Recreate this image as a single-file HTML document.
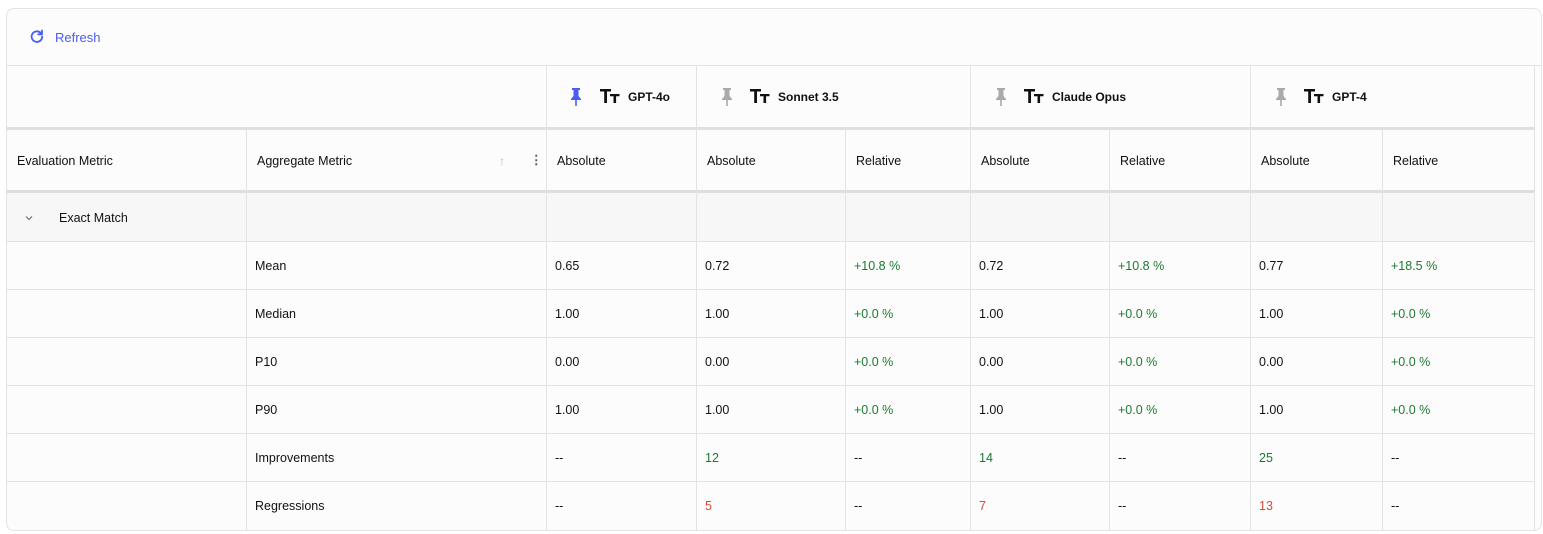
<!DOCTYPE html>
<html><head><style>
*{box-sizing:border-box;margin:0;padding:0}
body{width:1543px;height:534px;background:#fff;font-family:"Liberation Sans",sans-serif;font-size:12.5px;color:#111;position:relative;overflow:hidden}
.box{position:absolute;left:6px;top:8px;width:1536px;height:523px;border:1px solid #e4e4e4;border-radius:8px;background:#fcfcfc;overflow:hidden}
.a{position:absolute}
.h{position:absolute;height:1px;background:#e3e3e3}
.v{position:absolute;width:1px;background:#e3e3e3}
.t{position:absolute;white-space:nowrap;line-height:14px;margin-top:1px}
.g{color:#1b7a2e}.r{color:#e0463a}
</style></head><body>
<div class="box"></div>
<svg class="a" style="left:29px;top:29px" width="16" height="16" viewBox="0 0 16 16"><path d="M13.2 7.5A5.3 5.3 0 1 1 11.6 3.8" fill="none" stroke="#4a5cf5" stroke-width="1.8" stroke-linecap="round"/><path d="M13 1.5v3.8H9.2" fill="none" stroke="#4a5cf5" stroke-width="1.8" stroke-linecap="round" stroke-linejoin="round"/></svg>
<div class="t" style="left:55px;top:30px;color:#4a5cf5;font-size:13px">Refresh</div>
<div class="h" style="left:7px;top:65px;width:1534px"></div>
<div class="h" style="left:7px;top:127px;width:1527px;height:3px;background:#e0e0e0"></div>
<div class="h" style="left:7px;top:190px;width:1527px;height:3px;background:#dedede"></div>
<div class="a" style="left:7px;top:193px;width:1527px;height:48px;background:#f7f7f7"></div>
<div class="h" style="left:7px;top:241px;width:1527px"></div>
<div class="h" style="left:7px;top:289px;width:1527px"></div>
<div class="h" style="left:7px;top:337px;width:1527px"></div>
<div class="h" style="left:7px;top:385px;width:1527px"></div>
<div class="h" style="left:7px;top:433px;width:1527px"></div>
<div class="h" style="left:7px;top:481px;width:1527px"></div>
<div class="v" style="left:546px;top:65px;height:466px"></div>
<div class="v" style="left:696px;top:65px;height:466px"></div>
<div class="v" style="left:970px;top:65px;height:466px"></div>
<div class="v" style="left:1250px;top:65px;height:466px"></div>
<div class="v" style="left:1534px;top:65px;height:466px"></div>
<div class="v" style="left:246px;top:130px;height:401px"></div>
<div class="v" style="left:845px;top:130px;height:401px"></div>
<div class="v" style="left:1109px;top:130px;height:401px"></div>
<div class="v" style="left:1382px;top:130px;height:401px"></div>
<svg class="a" style="left:568px;top:87px" width="16" height="20" viewBox="0 0 16 20"><path d="M4 1h8v2h-1.5v6l2.5 3v1H3v-1l2.5-3V3H4z" fill="#4a5cf5"/><rect x="7.2" y="13" width="1.6" height="6" fill="#4a5cf5"/></svg>
<svg class="a" style="left:719px;top:87px" width="16" height="20" viewBox="0 0 16 20"><path d="M4 1h8v2h-1.5v6l2.5 3v1H3v-1l2.5-3V3H4z" fill="#aaa"/><rect x="7.2" y="13" width="1.6" height="6" fill="#aaa"/></svg>
<svg class="a" style="left:993px;top:87px" width="16" height="20" viewBox="0 0 16 20"><path d="M4 1h8v2h-1.5v6l2.5 3v1H3v-1l2.5-3V3H4z" fill="#aaa"/><rect x="7.2" y="13" width="1.6" height="6" fill="#aaa"/></svg>
<svg class="a" style="left:1273px;top:87px" width="16" height="20" viewBox="0 0 16 20"><path d="M4 1h8v2h-1.5v6l2.5 3v1H3v-1l2.5-3V3H4z" fill="#aaa"/><rect x="7.2" y="13" width="1.6" height="6" fill="#aaa"/></svg>
<svg class="a" style="left:600px;top:88px" width="20" height="16" viewBox="0 0 20 16"><path d="M0 1h11v2.5H7V15H4.2V3.5H0z M10 6h9.5v2.2h-3.4V15h-2.6V8.2H10z" fill="#111"/></svg>
<svg class="a" style="left:750px;top:88px" width="20" height="16" viewBox="0 0 20 16"><path d="M0 1h11v2.5H7V15H4.2V3.5H0z M10 6h9.5v2.2h-3.4V15h-2.6V8.2H10z" fill="#111"/></svg>
<svg class="a" style="left:1024px;top:88px" width="20" height="16" viewBox="0 0 20 16"><path d="M0 1h11v2.5H7V15H4.2V3.5H0z M10 6h9.5v2.2h-3.4V15h-2.6V8.2H10z" fill="#111"/></svg>
<svg class="a" style="left:1304px;top:88px" width="20" height="16" viewBox="0 0 20 16"><path d="M0 1h11v2.5H7V15H4.2V3.5H0z M10 6h9.5v2.2h-3.4V15h-2.6V8.2H10z" fill="#111"/></svg>
<div class="t" style="left:628px;top:89px;font-weight:bold;font-size:12px">GPT-4o</div>
<div class="t" style="left:778px;top:89px;font-weight:bold;font-size:12px">Sonnet 3.5</div>
<div class="t" style="left:1052px;top:89px;font-weight:bold;font-size:12px">Claude Opus</div>
<div class="t" style="left:1332px;top:89px;font-weight:bold;font-size:12px">GPT-4</div>
<div class="t" style="left:17px;top:153px">Evaluation Metric</div>
<div class="t" style="left:257px;top:153px">Aggregate Metric</div>
<div class="t" style="left:499px;top:153px;color:#bbb;font-size:12px">↑</div>
<div class="t" style="left:530px;top:152px;color:#555;font-weight:bold">⋮</div>
<div class="t" style="left:557px;top:153px">Absolute</div>
<div class="t" style="left:707px;top:153px">Absolute</div>
<div class="t" style="left:856px;top:153px">Relative</div>
<div class="t" style="left:981px;top:153px">Absolute</div>
<div class="t" style="left:1120px;top:153px">Relative</div>
<div class="t" style="left:1261px;top:153px">Absolute</div>
<div class="t" style="left:1393px;top:153px">Relative</div>
<svg class="a" style="left:24px;top:214px" width="10" height="8" viewBox="0 0 10 8"><path d="M2 2.5l3 3 3-3" fill="none" stroke="#666" stroke-width="1.1"/></svg>
<div class="t" style="left:59px;top:210px">Exact Match</div>
<div class="t" style="left:255px;top:258px">Mean</div>
<div class="t" style="left:555px;top:258px">0.65</div><div class="t" style="left:705px;top:258px">0.72</div><div class="t g" style="left:854px;top:258px">+10.8 %</div><div class="t" style="left:979px;top:258px">0.72</div><div class="t g" style="left:1118px;top:258px">+10.8 %</div><div class="t" style="left:1259px;top:258px">0.77</div><div class="t g" style="left:1391px;top:258px">+18.5 %</div>
<div class="t" style="left:255px;top:306px">Median</div>
<div class="t" style="left:555px;top:306px">1.00</div><div class="t" style="left:705px;top:306px">1.00</div><div class="t g" style="left:854px;top:306px">+0.0 %</div><div class="t" style="left:979px;top:306px">1.00</div><div class="t g" style="left:1118px;top:306px">+0.0 %</div><div class="t" style="left:1259px;top:306px">1.00</div><div class="t g" style="left:1391px;top:306px">+0.0 %</div>
<div class="t" style="left:255px;top:354px">P10</div>
<div class="t" style="left:555px;top:354px">0.00</div><div class="t" style="left:705px;top:354px">0.00</div><div class="t g" style="left:854px;top:354px">+0.0 %</div><div class="t" style="left:979px;top:354px">0.00</div><div class="t g" style="left:1118px;top:354px">+0.0 %</div><div class="t" style="left:1259px;top:354px">0.00</div><div class="t g" style="left:1391px;top:354px">+0.0 %</div>
<div class="t" style="left:255px;top:402px">P90</div>
<div class="t" style="left:555px;top:402px">1.00</div><div class="t" style="left:705px;top:402px">1.00</div><div class="t g" style="left:854px;top:402px">+0.0 %</div><div class="t" style="left:979px;top:402px">1.00</div><div class="t g" style="left:1118px;top:402px">+0.0 %</div><div class="t" style="left:1259px;top:402px">1.00</div><div class="t g" style="left:1391px;top:402px">+0.0 %</div>
<div class="t" style="left:255px;top:450px">Improvements</div>
<div class="t" style="left:555px;top:450px">--</div><div class="t g" style="left:705px;top:450px">12</div><div class="t" style="left:854px;top:450px">--</div><div class="t g" style="left:979px;top:450px">14</div><div class="t" style="left:1118px;top:450px">--</div><div class="t g" style="left:1259px;top:450px">25</div><div class="t" style="left:1391px;top:450px">--</div>
<div class="t" style="left:255px;top:498px">Regressions</div>
<div class="t" style="left:555px;top:498px">--</div><div class="t r" style="left:705px;top:498px">5</div><div class="t" style="left:854px;top:498px">--</div><div class="t r" style="left:979px;top:498px">7</div><div class="t" style="left:1118px;top:498px">--</div><div class="t r" style="left:1259px;top:498px">13</div><div class="t" style="left:1391px;top:498px">--</div>
</body></html>
